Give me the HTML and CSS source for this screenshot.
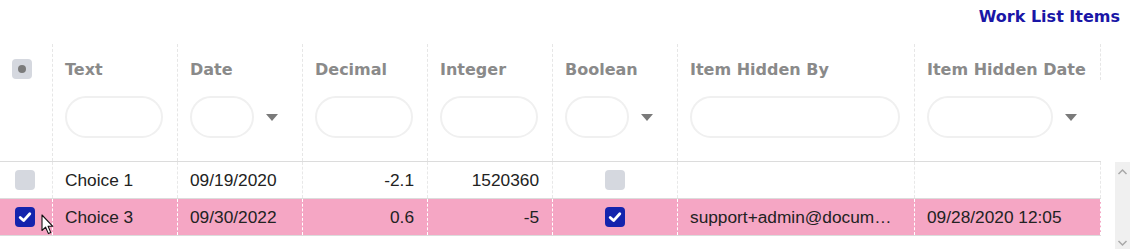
FILE: index.html
```html
<!DOCTYPE html>
<html lang="en">
<head>
  <meta charset="UTF-8">
  <title>Work List Items</title>
  <link rel="stylesheet" href="styles.css">
</head>
<body>
  <div class="title-bar"><span class="title">Work List Items</span></div>
  <div class="grid-wrap">
    <div class="grid">
      <div class="head-row">
        <div class="hcell check-col">
          <span class="box box-some"><span class="dot"></span></span>
        </div>
        <div class="hcell">
          <div class="hlabel">Text</div>
          <div class="filter"><span class="pill"></span></div>
        </div>
        <div class="hcell">
          <div class="hlabel">Date</div>
          <div class="filter drop"><span class="pill"></span><span class="caret"></span></div>
        </div>
        <div class="hcell">
          <div class="hlabel">Decimal</div>
          <div class="filter"><span class="pill"></span></div>
        </div>
        <div class="hcell">
          <div class="hlabel">Integer</div>
          <div class="filter"><span class="pill"></span></div>
        </div>
        <div class="hcell">
          <div class="hlabel">Boolean</div>
          <div class="filter drop"><span class="pill"></span><span class="caret"></span></div>
        </div>
        <div class="hcell">
          <div class="hlabel">Item Hidden By</div>
          <div class="filter"><span class="pill"></span></div>
        </div>
        <div class="hcell last">
          <div class="hlabel">Item Hidden Date</div>
          <div class="filter drop"><span class="pill"></span><span class="caret"></span></div>
        </div>
      </div>

      <div class="row">
        <div class="cell check-col"><span class="box"></span></div>
        <div class="cell">Choice 1</div>
        <div class="cell">09/19/2020</div>
        <div class="cell num">-2.1</div>
        <div class="cell num">1520360</div>
        <div class="cell center"><span class="box"></span></div>
        <div class="cell"></div>
        <div class="cell last"></div>
      </div>

      <div class="row selected">
        <div class="cell check-col">
          <span class="box box-on">
            <svg width="20" height="20" viewBox="0 0 20 20"><path d="M5.2 10.4 L8.6 13.6 L14.8 6.8" fill="none" stroke="#fff" stroke-width="2.8" stroke-linecap="round" stroke-linejoin="round"/></svg>
          </span>
          <svg class="pointer" width="14" height="21" viewBox="0 0 14 21"><path d="M1 1 L1 16.5 L4.6 13.2 L7.4 19.6 L9.8 18.6 L7.1 12.3 L11.8 12.3 Z" fill="#fff" stroke="#111" stroke-width="1.1" stroke-linejoin="round"/></svg>
        </div>
        <div class="cell">Choice 3</div>
        <div class="cell">09/30/2022</div>
        <div class="cell num">0.6</div>
        <div class="cell num">-5</div>
        <div class="cell center">
          <span class="box box-on">
            <svg width="20" height="20" viewBox="0 0 20 20"><path d="M5.2 10.4 L8.6 13.6 L14.8 6.8" fill="none" stroke="#fff" stroke-width="2.8" stroke-linecap="round" stroke-linejoin="round"/></svg>
          </span>
        </div>
        <div class="cell">support+admin@docum…</div>
        <div class="cell last">09/28/2020 12:05</div>
      </div>
    </div>

    <div class="scrollbar">
      <svg width="15" height="12" viewBox="0 0 15 12"><path d="M3.5 8 L7.5 4 L11.5 8" fill="none" stroke="#a8a8a8" stroke-width="1.5"/></svg>
      <svg width="15" height="12" viewBox="0 0 15 12"><path d="M3.5 4 L7.5 8 L11.5 4" fill="none" stroke="#a8a8a8" stroke-width="1.5"/></svg>
    </div>
  </div>
</body>
</html>
```

FILE: styles.css
```css
body {
  margin: 0;
  font-family: "Liberation Sans", Arial, sans-serif;
  color: #222;
  background: #fff;
  overflow: hidden;
}
.title-bar {
  height: 44px;
  display: flex;
  justify-content: flex-end;
  padding-right: 10px;
}
.title {
  font-family: "DejaVu Sans", sans-serif;
  font-weight: bold;
  font-size: 16px;
  line-height: 19px;
  margin-top: 7px;
  color: #1a16a6;
}
.grid-wrap {
  display: flex;
  align-items: flex-start;
}
.grid {
  width: 1101px;
}
.head-row, .row {
  display: grid;
  grid-template-columns: 52px 125px 125px 125px 125px 125px 237px 187px;
}
.head-row {
  height: 117px;
  border-bottom: 1px solid #dcdcdc;
}
.hcell {
  border-left: 1px dashed #e6e6e6;
  padding: 16px 0 0 12px;
  position: relative;
}
.hcell.check-col {
  border-left: none;
  padding: 15px 0 0 12px;
}
.hcell.last::after {
  content: "";
  position: absolute;
  top: 0;
  right: 0;
  height: 36px;
  border-right: 1px dashed #e6e6e6;
}
.hlabel {
  font-family: "DejaVu Sans", sans-serif;
  font-weight: bold;
  font-size: 16px;
  line-height: 19px;
  color: #8a8a8a;
  white-space: nowrap;
}
.filter {
  display: flex;
  align-items: center;
  margin-top: 17px;
  padding-right: 14px;
}
.filter.drop {
  padding-right: 24px;
}
.pill {
  flex: 1;
  height: 42px;
  box-sizing: border-box;
  border: 2px solid #f0f0f0;
  border-radius: 21px;
}
.caret {
  margin-left: 12px;
  width: 0;
  height: 0;
  border-left: 6px solid transparent;
  border-right: 6px solid transparent;
  border-top: 7px solid #7a7a7a;
}
.box {
  display: inline-flex;
  align-items: center;
  justify-content: center;
  width: 20px;
  height: 20px;
  border-radius: 4px;
  background: #d5d8df;
}
.box-some .dot {
  width: 8px;
  height: 8px;
  border-radius: 50%;
  background: #7b7b7b;
}
.box-on {
  background: #1423ad;
}
.row {
  height: 36px;
  border-bottom: 1px solid #dcdcdc;
  font-size: 17.3px;
}
.row.selected {
  background: #f5a6c4;
}
.cell {
  display: flex;
  align-items: center;
  padding: 0 13px 0 12px;
  border-left: 1px dashed #e8e8e8;
  white-space: nowrap;
  overflow: hidden;
  min-width: 0;
}
.row.selected .cell {
  border-left-color: #fff;
}
.cell.check-col {
  border-left: none;
  padding-left: 15px;
  position: relative;
  overflow: visible;
}
.cell.last {
  border-right: 1px dashed #e8e8e8;
}
.row.selected .cell.last {
  border-right-color: #fff;
}
.cell.num {
  justify-content: flex-end;
}
.cell.center {
  justify-content: center;
}
.pointer {
  position: absolute;
  left: 41px;
  top: 15px;
}
.scrollbar {
  margin-left: 14px;
  margin-top: 118px;
  width: 15px;
  height: 87px;
  background: #f0f0f0;
  display: flex;
  flex-direction: column;
  justify-content: space-between;
  padding: 4px 0 0;
  box-sizing: border-box;
}
```
